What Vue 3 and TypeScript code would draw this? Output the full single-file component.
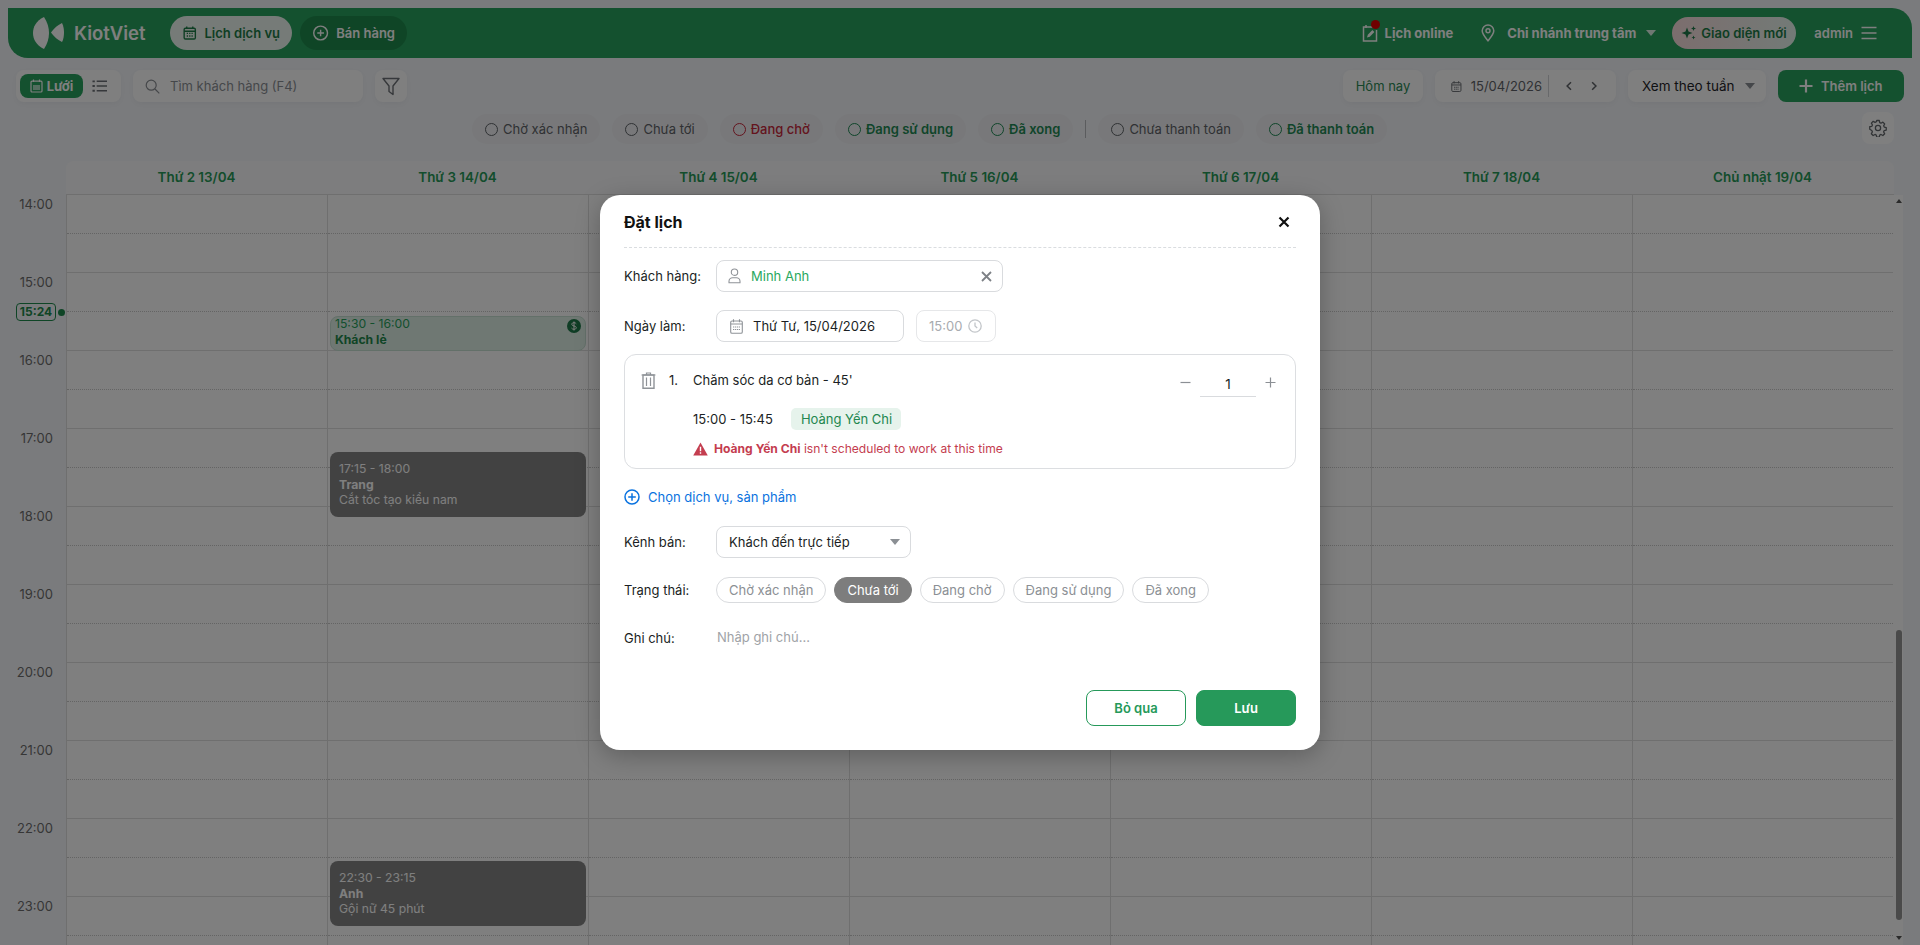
<script setup lang="ts">
const days = ['Thứ 2 13/04', 'Thứ 3 14/04', 'Thứ 4 15/04', 'Thứ 5 16/04', 'Thứ 6 17/04', 'Thứ 7 18/04', 'Chủ nhật 19/04']
const hours = [14, 15, 16, 17, 18, 19, 20, 21, 22, 23]

interface CalEvent {
  hour: number
  kind: string
  time: string
  name: string
  note?: string
}
const events: CalEvent[] = [
  { hour: 15, kind: 'ev-green', time: '15:30 - 16:00', name: 'Khách lẻ' },
  { hour: 17, kind: 'ev-dark ev-a', time: '17:15 - 18:00', name: 'Trang', note: 'Cắt tóc tạo kiểu nam' },
  { hour: 22, kind: 'ev-dark ev-b', time: '22:30 - 23:15', name: 'Anh', note: 'Gội nữ 45 phút' },
]
const eventFor = (h: number, d: number) => (d === 1 ? events.find((e) => e.hour === h) : undefined)

const chipsA = [
  { t: 'Chờ xác nhận', c: 'c-grey' },
  { t: 'Chưa tới', c: 'c-grey' },
  { t: 'Đang chờ', c: 'c-red' },
  { t: 'Đang sử dụng', c: 'c-green' },
  { t: 'Đã xong', c: 'c-green' },
]
const chipsB = [
  { t: 'Chưa thanh toán', c: 'c-grey' },
  { t: 'Đã thanh toán', c: 'c-green' },
]
const statuses = ['Chờ xác nhận', 'Chưa tới', 'Đang chờ', 'Đang sử dụng', 'Đã xong']
</script>

<template>
  <div class="page">
    <header class="topbar">
      <div class="logo">
        <svg width="34" height="34" viewBox="0 0 34 34">
          <path d="M12 1C4 5 1 11 1 17c0 6 3 12 11 16 3.500-5 5-11 5-16S15.500 6 12 1z" fill="#fff" />
          <path d="M19 16.500C22 12 26 9 30 7c1.500 3 2 6.500 2 9.500s-.5 7-2 9.500c-4-2-8-5-11-9.500z" fill="#fff" />
        </svg>
        <span class="logo-text">KiotViet</span>
      </div>
      <div class="nav-pill nav-active">
        <svg width="18" height="18" viewBox="0 0 18 18" fill="none" stroke="currentColor" stroke-width="1.600">
          <rect x="2.500" y="3.500" width="13" height="12.500" rx="1.500" />
          <path d="M5.500 1.500v3M12.500 1.500v3M2.500 7h13" />
          <path d="M5.500 9.500h1.500M8.300 9.500h1.500M11 9.500h1.500M5.500 12.500h1.500M8.300 12.500h1.500M11 12.500h1.500" />
        </svg>
        <span>Lịch dịch vụ</span>
      </div>
      <div class="nav-pill nav-dark">
        <svg width="18" height="18" viewBox="0 0 18 18" fill="none" stroke="currentColor" stroke-width="1.500">
          <circle cx="9" cy="9" r="7.200" />
          <path d="M9 5.500v7M5.500 9h7" />
        </svg>
        <span>Bán hàng</span>
      </div>
      <div class="spacer"></div>
      <div class="top-item online">
        <span class="online-icon">
          <svg width="16" height="18" viewBox="0 0 16 18" fill="none" stroke="currentColor" stroke-width="1.500">
            <path d="M11 3H1.500v14h13V6" />
            <path d="M4 1v3" />
            <path d="M5 13.500l.8-2.800 4.600-4.600 2 2-4.600 4.600z" fill="currentColor" stroke="none" />
          </svg>
          <i class="red-dot"></i>
        </span>
        <span>Lịch online</span>
      </div>
      <div class="top-item branch">
        <svg width="14" height="18" viewBox="0 0 14 18" fill="none" stroke="currentColor" stroke-width="1.500">
          <path d="M7 16.800C3.800 12.800 1.200 10 1.200 6.800a5.800 5.800 0 0 1 11.600 0c0 3.200-2.600 6-5.800 10z" />
          <circle cx="7" cy="6.800" r="2" />
        </svg>
        <span class="branch-text">Chi nhánh trung tâm</span>
        <i class="caret caret-light"></i>
      </div>
      <div class="new-ui">
        <svg width="16" height="16" viewBox="0 0 16 16" fill="#1f7a4a">
          <path d="M6 2.500l1.500 4 4 1.500-4 1.500-1.500 4-1.500-4-4-1.500 4-1.500z" />
          <path d="M12.500 1l.7 1.800 1.800.7-1.800.7-.7 1.800-.7-1.800L10 3.500l1.800-.7zM12.500 10.500l.6 1.400 1.400.6-1.400.6-.6 1.400-.6-1.400-1.400-.6 1.400-.6z" />
        </svg>
        <span>Giao diện mới</span>
      </div>
      <div class="top-item admin">
        <span>admin</span>
        <svg width="16" height="14" viewBox="0 0 16 14" stroke="currentColor" stroke-width="1.500">
          <path d="M0.500 1.500h15M0.500 7h15M0.500 12.500h15" />
        </svg>
      </div>
    </header>

    <div class="toolbar">
      <div class="tb-left">
        <div class="box view-toggle">
          <div class="view-on">
            <svg width="13" height="14" viewBox="0 0 13 14" fill="none" stroke="currentColor" stroke-width="1.200">
              <rect x="1" y="2.200" width="11" height="10.800" rx="1" />
              <path d="M3.500 .5v2.500M9.500 .5v2.500" />
              <rect x="3" y="6" width="7" height="5" fill="currentColor" stroke="none" opacity=".6" />
            </svg>
            <span>Lưới</span>
          </div>
          <svg class="list-ic" width="15" height="14" viewBox="0 0 16 14" fill="none" stroke="#6d7176" stroke-width="1.500">
            <path d="M5 2h11M5 7h11M5 12h11" />
            <path d="M0.500 2h2.500M0.500 7h2.500M0.500 12h2.500" stroke-width="2" />
          </svg>
        </div>
        <div class="box search">
          <svg width="15" height="15" viewBox="0 0 15 15" fill="none" stroke="#8b8f94" stroke-width="1.200">
            <circle cx="6.200" cy="6.200" r="5" />
            <path d="M10 10l4.300 4.300" />
          </svg>
          <span>Tìm khách hàng (F4)</span>
        </div>
        <div class="box square">
          <svg width="18" height="19" viewBox="0 0 18 19" fill="none" stroke="#6d7176" stroke-width="1.400" stroke-linejoin="round">
            <path d="M1 1.500h16l-6 7.500v8.500l-4-3V9z" />
          </svg>
        </div>
      </div>
      <div class="tb-right">
        <div class="box today">Hôm nay</div>
        <div class="box date-nav">
          <svg width="14" height="15" viewBox="0 0 14 15" fill="none" stroke="#6d7176" stroke-width="1.300">
            <rect x="1" y="2.500" width="12" height="11.500" rx="1.500" />
            <path d="M4 .5v3M10 .5v3M1 5.500h12" />
            <path d="M4 8.500h6M4 11h6" stroke-dasharray="1.500 .7" />
          </svg>
          <span class="date-text">15/04/2026</span>
          <i class="vline"></i>
          <svg class="chev" width="8" height="12" viewBox="0 0 8 12" fill="none" stroke="#5f6368" stroke-width="2"><path d="M6.500 1L1.500 6l5 5" /></svg>
          <svg class="chev" width="8" height="12" viewBox="0 0 8 12" fill="none" stroke="#5f6368" stroke-width="2"><path d="M1.500 1l5 5-5 5" /></svg>
        </div>
        <div class="box week">
          <span>Xem theo tuần</span>
          <i class="caret caret-grey"></i>
        </div>
        <div class="add-btn">
          <svg width="14" height="14" viewBox="0 0 14 14" stroke="currentColor" stroke-width="2.200"><path d="M7 0.500v13M0.500 7h13" /></svg>
          <span>Thêm lịch</span>
        </div>
      </div>
    </div>

    <div class="chips-row">
      <div class="chips">
        <div v-for="c in chipsA" :key="c.t" class="chip" :class="c.c"><i class="ring"></i>{{ c.t }}</div>
        <i class="chip-sep"></i>
        <div v-for="c in chipsB" :key="c.t" class="chip" :class="c.c"><i class="ring"></i>{{ c.t }}</div>
      </div>
      <div class="gear">
        <svg width="18" height="18" viewBox="0 0 24 24" fill="none" stroke="#62666b" stroke-width="1.700" stroke-linejoin="round">
          <path d="M10.300 2h3.400l.6 2.800 1.700.8 2.500-1.400 2.400 2.400-1.400 2.500.8 1.700 2.700.6v3.400l-2.700.6-.8 1.700 1.400 2.500-2.400 2.400-2.500-1.400-1.700.8-.6 2.700h-3.400l-.6-2.700-1.700-.8-2.500 1.400-2.400-2.400 1.400-2.500-.8-1.700L1 13.700v-3.400l2.800-.6.8-1.700-1.400-2.500 2.400-2.400 2.500 1.400 1.700-.8z" />
          <circle cx="12" cy="12" r="3.500" />
        </svg>
      </div>
    </div>

    <div class="calendar">
      <div class="cal-head">
        <div v-for="d in days" :key="d" class="head-cell">{{ d }}</div>
      </div>
      <div class="cal-body">
        <div v-for="h in hours" :key="h" class="hour-row">
          <div class="time-cell">
            <span>{{ h }}:00</span>
            <div v-if="h === 15" class="now"><b>15:24</b><i></i></div>
          </div>
          <div v-for="(d, i) in days" :key="d" class="cell">
            <div class="half half-a"></div>
            <div class="half half-b"></div>
            <div v-if="eventFor(h, i)" class="event" :class="eventFor(h, i)!.kind">
              <div class="ev-time">{{ eventFor(h, i)!.time }}</div>
              <div class="ev-name">{{ eventFor(h, i)!.name }}</div>
              <div v-if="eventFor(h, i)!.note" class="ev-note">{{ eventFor(h, i)!.note }}</div>
              <svg v-if="h === 15" class="dollar" width="14" height="14" viewBox="0 0 14 14">
                <circle cx="7" cy="7" r="7" fill="#1f7a4a" />
                <path d="M9.300 4.800C8.800 4 8 3.700 7 3.700c-1.300 0-2.200.6-2.200 1.600 0 2.400 4.500 1 4.500 3.400 0 1-1 1.600-2.300 1.600-1.100 0-2-.4-2.500-1.200M7 2.500v9" fill="none" stroke="#fff" stroke-width="1" />
              </svg>
            </div>
          </div>
        </div>
      </div>
      <div class="scroll-thumb"></div>
      <i class="sc-arrow sc-up"></i>
      <i class="sc-arrow sc-down"></i>
    </div>

    <div class="overlay">
      <section class="modal">
        <div class="m-head">
          <h2>Đặt lịch</h2>
          <svg width="12" height="12" viewBox="0 0 12 12" stroke="#111" stroke-width="2.200"><path d="M1.500 1.500l9 9M10.500 1.500l-9 9" /></svg>
        </div>

        <div class="m-row r-customer">
          <label>Khách hàng:</label>
          <div class="input customer">
            <svg width="13" height="16" viewBox="0 0 13 16" fill="none" stroke="#8f9398" stroke-width="1.100">
              <circle cx="6.500" cy="4.200" r="3.200" />
              <path d="M1 14.800v-1.600c0-2 2-3.300 3.500-3.400h4c1.500.1 3.500 1.400 3.500 3.400v1.600z" />
            </svg>
            <span class="cust-name">Minh Anh</span>
            <svg class="clear" width="11" height="11" viewBox="0 0 11 11" stroke="#7d8186" stroke-width="1.800"><path d="M1 1l9 9M10 1l-9 9" /></svg>
          </div>
        </div>

        <div class="m-row r-date">
          <label>Ngày làm:</label>
          <div class="input date">
            <svg width="13" height="15" viewBox="0 0 13 15" fill="none" stroke="#8f9398" stroke-width="1.100">
              <rect x=".7" y="2" width="11.600" height="12.300" rx="1.300" />
              <path d="M3.500 .3v3M9.500 .3v3M.7 5h11.600" />
              <path d="M3 8h7M3 10.500h7" stroke-dasharray="1.300 .7" />
            </svg>
            <span>Thứ Tư, 15/04/2026</span>
          </div>
          <div class="input time">
            <span>15:00</span>
            <svg width="14" height="14" viewBox="0 0 14 14" fill="none" stroke="#c2c5c9" stroke-width="1.300">
              <circle cx="7" cy="7" r="6.200" />
              <path d="M7 3.500V7l2.200 2" />
            </svg>
          </div>
        </div>

        <div class="svc-card">
          <div class="svc-top">
            <svg class="trash" width="15" height="17" viewBox="0 0 15 17" fill="none" stroke="#8f9398" stroke-width="1.200">
              <path d="M.5 3h14M5.500 3V1h4v2" />
              <path d="M2 3h11v13.300H2z" stroke-width="1.400" />
              <path d="M5.500 5.500v8.500M9.500 5.500v8.500" />
            </svg>
            <span class="svc-no">1.</span>
            <span class="svc-name">Chăm sóc da cơ bản - 45'</span>
            <div class="qty">
              <svg class="q-ic" width="11" height="11" viewBox="0 0 11 11" stroke="#8b8f94" stroke-width="1.200"><path d="M.5 5.500h10" /></svg>
              <span class="q-val">1</span>
              <svg class="q-ic" width="11" height="11" viewBox="0 0 11 11" stroke="#8b8f94" stroke-width="1.200"><path d="M.5 5.500h10M5.500 .5v10" /></svg>
            </div>
          </div>
          <div class="svc-mid">
            <span>15:00 - 15:45</span>
            <span class="staff">Hoàng Yến Chi</span>
          </div>
          <div class="svc-warn">
            <svg width="15" height="14" viewBox="0 0 14 13">
              <path d="M7 .5L13.800 12.500H.2z" fill="#c43d4f" />
              <path d="M7 4.500v4M7 9.600v1.400" stroke="#fff" stroke-width="1.300" />
            </svg>
            <span><b>Hoàng Yến Chi</b> isn't scheduled to work at this time</span>
          </div>
        </div>

        <div class="add-svc">
          <svg width="16" height="16" viewBox="0 0 16 16" fill="none" stroke="#0a73e0" stroke-width="1.500">
            <circle cx="8" cy="8" r="7" />
            <path d="M8 4.200v7.600M4.200 8h7.600" />
          </svg>
          <span>Chọn dịch vụ, sản phẩm</span>
        </div>

        <div class="m-row r-channel">
          <label>Kênh bán:</label>
          <div class="input channel">
            <span>Khách đến trực tiếp</span>
            <i class="caret caret-grey"></i>
          </div>
        </div>

        <div class="m-row r-status">
          <label>Trạng thái:</label>
          <div class="pills">
            <span v-for="s in statuses" :key="s" class="pill" :class="{ 'pill-on': s === 'Chưa tới' }">{{ s }}</span>
          </div>
        </div>

        <div class="m-row r-note">
          <label>Ghi chú:</label>
          <span class="note-ph">Nhập ghi chú...</span>
        </div>

        <div class="m-actions">
          <button class="btn btn-ghost">Bỏ qua</button>
          <button class="btn btn-solid">Lưu</button>
        </div>
      </section>
    </div>
  </div>
</template>

<style>
html, body { margin: 0; padding: 0; }
</style>

<style scoped>
.page {
  position: relative;
  width: 1920px;
  height: 945px;
  overflow: hidden;
  background: #f5f7fb;
  font-family: Inter, "Noto Sans", sans-serif;
  font-size: 13px;
  color: #1f2328;
  display: flex;
  flex-direction: column;
}
i { display: block; font-style: normal; }

/* top bar */
.topbar {
  margin: 8px 8px 0;
  height: 50px;
  flex: none;
  background: #28a25e;
  border-radius: 0 20px 0 20px;
  display: flex;
  align-items: center;
  padding: 0 35px 0 24px;
  color: #fff;
  font-weight: 600;
}
.logo { display: flex; align-items: center; width: 138px; flex: none; }
.logo-text { margin-left: 8px; font-size: 18.500px; font-weight: 600; }
.nav-pill {
  height: 34px;
  border-radius: 17px;
  display: flex;
  align-items: center;
  gap: 7px;
  padding: 0 12px;
  font-size: 13px;
  white-space: nowrap;
  flex: none;
  box-sizing: border-box;
}
.nav-active { background: #edf7f1; color: #1c7c47; width: 122px; }
.nav-dark { background: #1f8a4d; margin-left: 8px; width: 107px; }
.spacer { flex: 1; }
.top-item { display: flex; align-items: center; white-space: nowrap; }
.online { gap: 7px; font-weight: 700; }
.online-icon { position: relative; display: flex; }
.red-dot { position: absolute; right: -2px; top: -4px; width: 9px; height: 9px; border-radius: 50%; background: #e00000; }
.branch { margin-left: 28px; font-weight: 700; }
.branch-text { margin-left: 12px; }
.caret { width: 0; height: 0; border-left: 5px solid transparent; border-right: 5px solid transparent; border-top: 6px solid; }
.caret-light { border-top-color: #fff; margin-left: 10px; opacity: .85; }
.caret-grey { border-top-color: #8b8f94; }
.new-ui {
  margin-left: 16px;
  height: 32px;
  width: 124px;
  box-sizing: border-box;
  border-radius: 16px;
  background: linear-gradient(90deg, #f8dcdc, #e6f5ee);
  color: #1c7c47;
  display: flex;
  align-items: center;
  gap: 4px;
  padding-left: 9px;
  white-space: nowrap;
}
.admin { margin-left: 18px; gap: 8px; }

/* toolbar */
.toolbar {
  flex: none;
  margin-top: 12px;
  height: 32px;
  padding: 0 16px;
  display: flex;
  justify-content: space-between;
}
.tb-left, .tb-right { display: flex; gap: 12px; }
.box {
  height: 32px;
  background: #fff;
  border-radius: 8px;
  box-sizing: border-box;
  display: flex;
  align-items: center;
  box-shadow: 0 2px 6px rgba(60, 70, 90, .06);
}
.view-toggle { width: 105px; padding-left: 4px; }
.view-on {
  width: 63px;
  height: 24px;
  background: #28a25e;
  border-radius: 8px;
  color: #fff;
  display: flex;
  align-items: center;
  justify-content: center;
  gap: 4px;
  font-weight: 700;
  font-size: 13px;
}
.list-ic { margin-left: 9px; }
.search { width: 230px; padding-left: 12px; gap: 10px; color: #8b8f94; font-size: 13px; }
.square { width: 32px; justify-content: center; }
.today { width: 80px; justify-content: center; color: #2a8a55; }
.date-nav { width: 181px; padding-left: 16px; color: #5f6368; }
.date-text { margin-left: 9px; }
.vline { width: 1px; height: 22px; background: #d0d3d7; margin: 0 17px 0 6px; }
.chev { margin-right: 19px; }
.week { width: 138px; padding-left: 14px; gap: 11px; color: #1f2328; font-size: 13.500px; }
.add-btn {
  width: 126px;
  height: 32px;
  border-radius: 8px;
  background: #28a25e;
  color: #fff;
  font-weight: 600;
  font-size: 13px;
  display: flex;
  align-items: center;
  gap: 8px;
  padding-left: 21px;
  box-sizing: border-box;
}

/* chips */
.chips-row { flex: none; margin-top: 10px; height: 34px; display: flex; padding: 0 26px 0 472px; justify-content: space-between; }
.chips { display: flex; align-items: center; gap: 12px; margin-top: 2px; height: 30px; }
.chip {
  height: 30px;
  border-radius: 15px;
  background: #f0f1f4;
  padding: 0 13px;
  display: flex;
  align-items: center;
  gap: 5px;
  font-size: 13px;
}
.ring { width: 13px; height: 13px; box-sizing: border-box; border-radius: 50%; border: 1.500px solid currentColor; }
.c-grey { color: #5f6368; }
.c-red { color: #c8283c; font-weight: 500; }
.c-green { color: #1f8a55; font-weight: 600; }
.chip-sep { width: 1px; height: 18px; background: #b6b9bd; }
.gear { width: 32px; height: 32px; background: #fff; border-radius: 8px; display: flex; align-items: center; justify-content: center; }

/* calendar */
.calendar { position: relative; flex: none; margin-top: 15px; padding-left: 66px; }
.cal-head {
  width: 1828px;
  height: 33px;
  display: flex;
  background: #fbfbfc;
  border-radius: 8px 8px 0 0;
  border-bottom: 1px solid #dedede;
}
.head-cell { width: 261px; text-align: center; line-height: 32px; color: #279a58; font-weight: 600; font-size: 13.400px; }
.cal-body { margin-left: -66px; }
.hour-row { display: flex; height: 78px; }
.time-cell { position: relative; width: 66px; box-sizing: border-box; color: #6d6d6d; padding: 1px 13px 0 0; text-align: right; font-size: 13px; line-height: 16px; }
.cell { position: relative; width: 261px; box-sizing: border-box; border-left: 1px solid #dedede; background: #fff; }
.half { height: 39px; box-sizing: border-box; }
.half-a { border-bottom: 1px dotted #c8c8c8; }
.half-b { border-bottom: 1px solid #dedede; }
.hour-row::after { content: ""; width: 10px; background: #fff; }

.now { position: absolute; left: 16px; top: 30px; display: flex; align-items: center; }
.now b {
  width: 40px;
  height: 18px;
  box-sizing: border-box;
  border: 1px solid #1f8a4d;
  border-radius: 4px;
  color: #1f8a4d;
  font-size: 12px;
  line-height: 16px;
  text-align: center;
  font-weight: 700;
}
.now i { width: 7px; height: 7px; border-radius: 50%; background: #1f8a4d; margin-left: 2px; }

.event {
  position: absolute;
  z-index: 2;
  left: 2px;
  width: 256px;
  box-sizing: border-box;
  border-radius: 8px;
  font-size: 12.200px;
  line-height: 15.500px;
}
.ev-green { top: 43px; height: 35px; background: #dff0e7; border: 1px solid #c7e0d3; color: #26a05b; padding: 0 4px; }
.ev-green .ev-time { margin-top: -1px; }
.ev-dark { height: 65px; background: #858585; color: #fff; padding: 9px 9px 0; }
.ev-a { top: 23px; }
.ev-b { top: 42px; }
.ev-name { font-weight: 700; }
.ev-green .ev-name { color: #1f8a4d; }
.dollar { position: absolute; right: 4px; top: 2px; }

.scroll-thumb { position: absolute; left: 1896px; top: 469px; width: 6px; height: 290px; border-radius: 3px; background: #949494; z-index: 3; }
.sc-arrow { position: absolute; z-index: 3; left: 1896px; width: 0; height: 0; border-left: 3px solid transparent; border-right: 3px solid transparent; }
.sc-up { top: 38px; border-bottom: 4px solid #555; }
.sc-down { top: 775px; border-top: 4px solid #555; }

/* modal */
.overlay {
  position: absolute;
  z-index: 5;
  inset: 0;
  background: rgba(0, 0, 0, .5);
  display: flex;
  justify-content: center;
  align-items: flex-start;
  padding-top: 195px;
  box-sizing: border-box;
}
.modal {
  width: 720px;
  height: 555px;
  box-sizing: border-box;
  background: #fff;
  border-radius: 20px;
  padding: 0 24px;
  box-shadow: 0 6px 24px rgba(0, 0, 0, .25);
  color: #1b1f24;
  display: flex;
  flex-direction: column;
}
.m-head {
  height: 53px;
  flex: none;
  display: flex;
  align-items: center;
  justify-content: space-between;
  border-bottom: 1px dashed #dadde0;
  padding: 2px 6px 0 0;
  box-sizing: border-box;
}
.m-head h2 { margin: 0; font-size: 16px; font-weight: 700; color: #111; }
.m-row { display: flex; align-items: center; flex: none; }
.m-row label { width: 92px; font-size: 13px; flex: none; }
.r-customer { margin-top: 12px; }
.r-date { margin-top: 18px; gap: 0; }
.input {
  height: 32px;
  box-sizing: border-box;
  border: 1px solid #d9dbde;
  border-radius: 8px;
  display: flex;
  align-items: center;
}
.customer { width: 287px; padding: 0 10px 0 11px; }
.cust-name { margin-left: 10px; color: #2aa860; flex: 1; }
.date { width: 188px; padding-left: 13px; gap: 10px; }
.time { width: 80px; margin-left: 12px; padding-left: 12px; gap: 6px; color: #a8abaf; border-color: #e6e7e9; }

.svc-card {
  margin-top: 12px;
  height: 115px;
  flex: none;
  box-sizing: border-box;
  border: 1px solid #dcdee1;
  border-radius: 12px;
  padding: 15px 16px 0;
}
.svc-top { display: flex; align-items: flex-start; height: 26px; }
.trash { margin-top: 2px; }
.svc-no { margin-left: 13px; width: 24px; line-height: 20px; }
.svc-name { line-height: 20px; flex: 1; }
.qty { display: flex; align-items: flex-start; margin-right: 3px; }
.q-ic { margin-top: 7px; }
.q-val { width: 56px; margin: 0 9px; text-align: center; height: 26px; line-height: 28px; border-bottom: 1px solid #d9dbde; font-size: 13.500px; }
.svc-mid { margin-top: 12px; padding-left: 52px; display: flex; align-items: center; gap: 18px; height: 22px; }
.staff { background: #e6f3ec; color: #23874f; border-radius: 5px; padding: 0 10px; line-height: 22px; width: 110px; box-sizing: border-box; white-space: nowrap; }
.svc-warn { margin-top: 11px; padding-left: 52px; display: flex; align-items: center; gap: 6px; color: #c43d4f; font-size: 12.100px; line-height: 16px; }
.svc-warn b { font-weight: 700; }

.add-svc { margin-top: 19px; height: 18px; display: flex; align-items: center; gap: 8px; color: #0a73e0; flex: none; }
.r-channel { margin-top: 20px; }
.channel { width: 195px; padding: 0 10px 0 12px; justify-content: space-between; }
.r-status { margin-top: 19px; height: 26px; }
.pills { display: flex; gap: 8px; }
.pill {
  height: 26px;
  box-sizing: border-box;
  border: 1px solid #d9dbde;
  border-radius: 13px;
  padding: 0 12px;
  line-height: 24px;
  color: #8b8f94;
  white-space: nowrap;
}
.pill-on { background: #7d7d7d; border-color: #7d7d7d; color: #fff; }
.r-note { margin-top: 26px; height: 18px; }
.note-ph { color: #a0a3a7; margin: -2px 0 0 1px; }
.m-actions { margin-top: 43px; display: flex; justify-content: flex-end; gap: 10px; flex: none; }
.btn {
  width: 100px;
  height: 36px;
  border-radius: 8px;
  font: 600 13px Inter, sans-serif;
}
.btn-ghost { background: #fff; border: 1px solid #26995a; color: #26995a; }
.btn-solid { background: #26995a; border: 1px solid #26995a; color: #fff; }
</style>
